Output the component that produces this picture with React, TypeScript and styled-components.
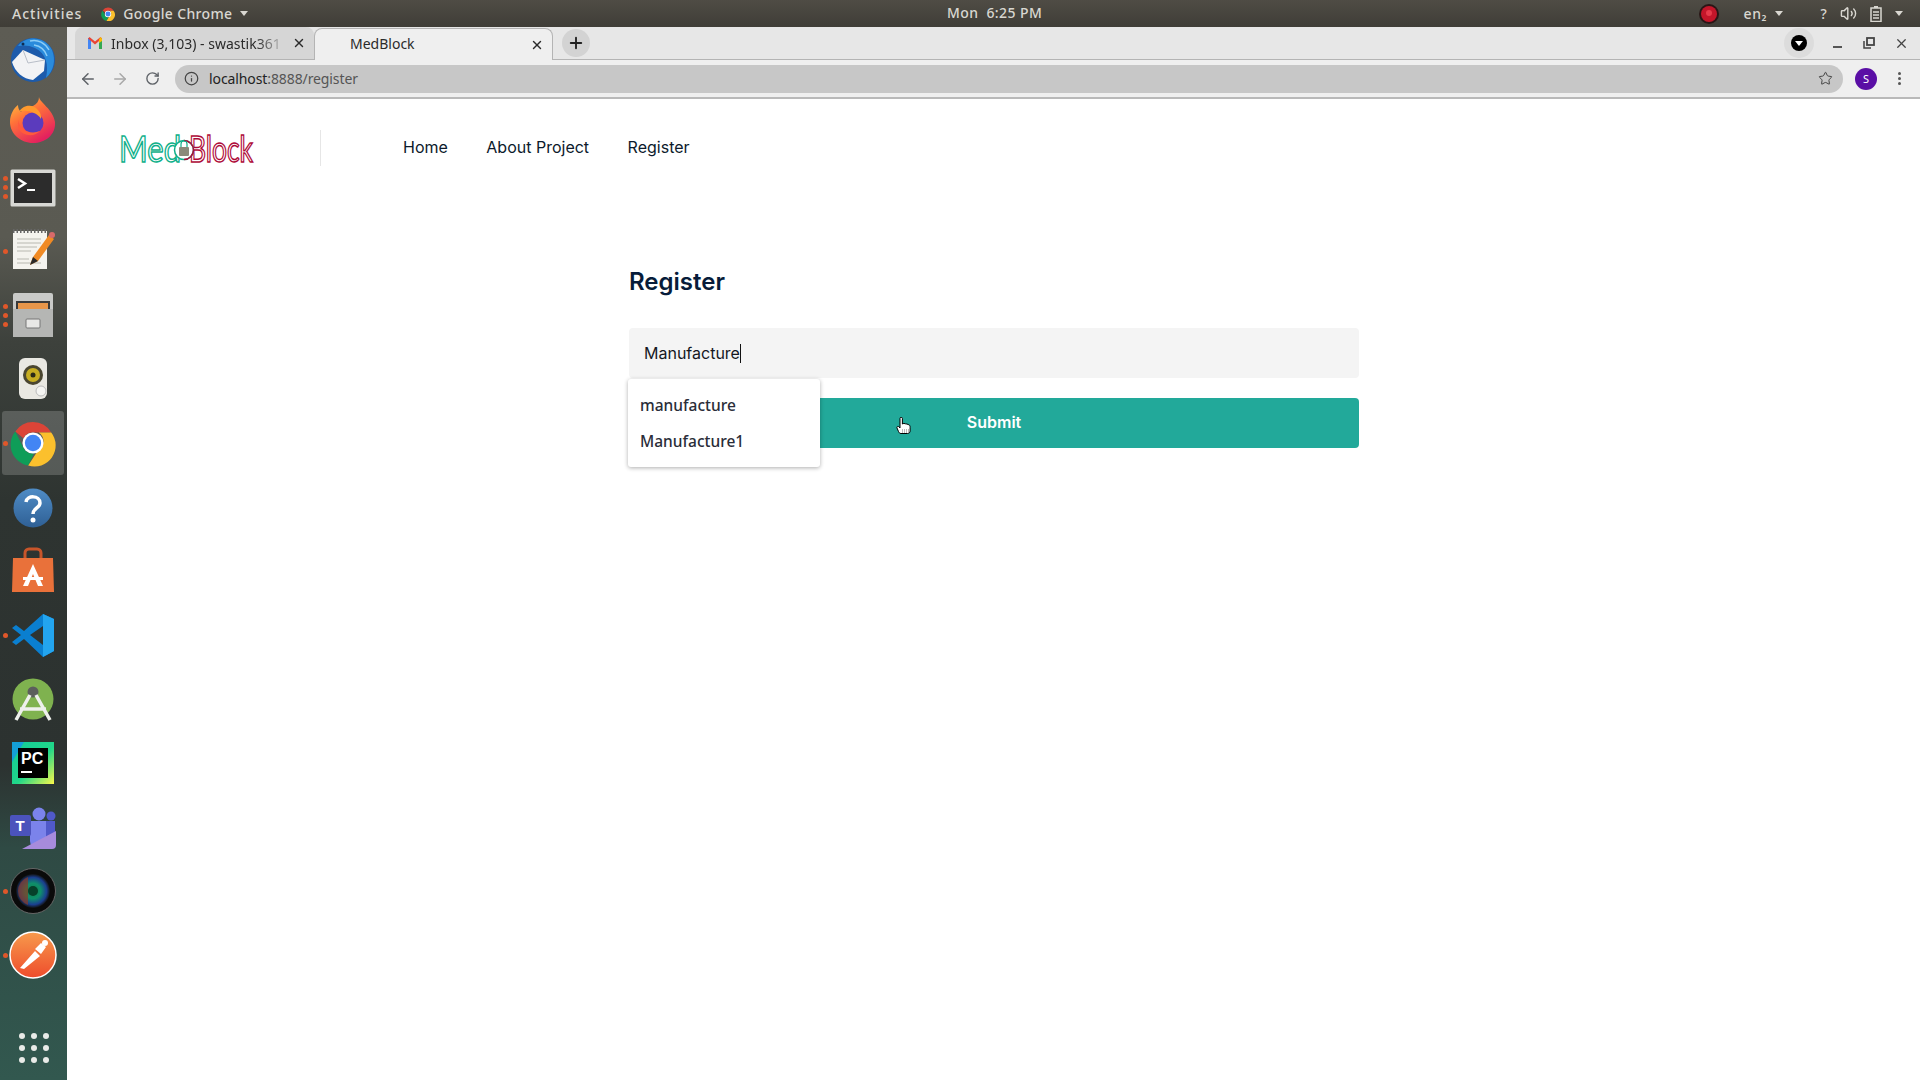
import React from "react";
import styled, { createGlobalStyle } from "styled-components";
import { ArrowLeft, ArrowRight, RotateCw, Info, Star, X, Plus, Volume2 } from "lucide-react";

const Global = createGlobalStyle`
  html, body { margin: 0; padding: 0; width: 1920px; height: 1080px; overflow: hidden; background: #fff; }
  * { box-sizing: border-box; }
`;

const Desktop = styled.div`
  width: 1920px; height: 1080px; display: flex; flex-direction: column;
  font-family: "Inter", "Liberation Sans", sans-serif;
`;
const TopBar = styled.div`
  height: 27px; flex: none; display: flex; align-items: center; padding: 0 0 0 12px;
  position: relative; color: #d9d7d1; font-family: "Noto Sans", sans-serif; font-size: 14px; font-weight: 500;
  background: linear-gradient(#4f4c45, #3f3d37);
`;
const TopLabel = styled.span<{ $gap?: number; $spacing?: number }>`
  margin-left: ${(p) => p.$gap ?? 0}px; white-space: nowrap; line-height: 27px; letter-spacing: ${(p) => p.$spacing ?? 0.2}px;
  display: inline-flex; align-items: center;
`;
const Clock = styled.span`
  position: absolute; left: 947px; top: 0; line-height: 26px; letter-spacing: 0.4px; white-space: nowrap;
`;
const Caret = styled.span<{ $gap?: number }>`
  width: 0; height: 0; margin-left: ${(p) => p.$gap ?? 6}px;
  border-left: 4.5px solid transparent; border-right: 4.5px solid transparent; border-top: 5px solid #d9d7d1;
`;
const TopRight = styled.div`
  margin-left: auto; display: flex; align-items: center; height: 27px;
`;
const Lang = styled.span`
  margin-left: 25px; font-size: 14px; letter-spacing: 0.6px; width: 28px;
`;
const Body = styled.div`
  flex: 1; display: flex; min-height: 0;
`;
const Dock = styled.nav`
  width: 67px; flex: none; display: flex; flex-direction: column; padding-top: 0;
  background: linear-gradient(#5d5c54 0%, #5a5a52 20%, #3d413c 30%, #2e3431 45%, #2c3230 70%, #2f4a44 78%, #32584f 100%);
`;
const DockItem = styled.div<{ $active?: boolean }>`
  position: relative; height: 64px; display: flex; align-items: center; justify-content: center;
  margin: 0 3px 0 2px;
  border-radius: 3px;
  background: ${(p) => (p.$active ? "rgba(255,255,255,0.18)" : "transparent")};
  svg { overflow: visible; }
`;
const Dots = styled.div`
  position: absolute; left: 1px; top: 0; bottom: 0; display: flex; flex-direction: column; justify-content: center; gap: 4px;
`;
const Dot = styled.i`
  display: block; width: 5px; height: 5px; border-radius: 50%; background: #e0572a;
`;
const DockGrid = styled.div`
  margin-top: auto; margin-bottom: 17px; align-self: center; display: grid; grid-template-columns: repeat(3, 6px); gap: 6px;
`;
const GridDot = styled.i`
  display: block; width: 6px; height: 6px; border-radius: 50%; background: #e9ebe8;
`;
const Browser = styled.div`
  flex: 1; display: flex; flex-direction: column; min-width: 0;
`;
const TabStrip = styled.div`
  height: 33px; flex: none; display: flex; align-items: flex-end; padding-left: 8px;
  background: #e7e7e7; border-bottom: 1px solid #b4b4b4; position: relative;
`;
const Tab = styled.div<{ $active?: boolean }>`
  width: 239px; height: 32px; display: flex; align-items: center; padding: 0 8px 0 ${(p) => (p.$active ? 11 : 12)}px;
  font-family: "Noto Sans", sans-serif; font-size: 14px; color: #2b2b2b;
  border-radius: 8px 8px 0 0;
  background: ${(p) => (p.$active ? "#efefef" : "#d6d6d6")};
  border: ${(p) => (p.$active ? "1px solid #b4b4b4" : "none")};
  border-bottom: none; position: relative; z-index: 1; margin-bottom: ${(p) => (p.$active ? -1 : 0)}px;
`;
const TabTitle = styled.span<{ $fade?: boolean; $raise?: boolean }>`
  flex: 1; margin-left: 8px; white-space: nowrap;
  ${(p) => p.$raise && `margin-bottom: 2px;`}
  ${(p) => p.$fade && `-webkit-mask-image: linear-gradient(90deg, #000 80%, transparent 97%);`}
`;
const Favicon = styled.span`
  width: 16px; height: 16px; flex: none; display: flex; align-items: center; justify-content: center;
`;
const NewTab = styled.div`
  width: 28px; height: 28px; border-radius: 50%; background: #d3d3d3; display: flex; align-items: center; justify-content: center;
  margin: 0 0 2px 9px; color: #222;
`;
const WindowButtons = styled.div`
  margin-left: auto; height: 32px; display: flex; align-items: center; color: #444; padding-right: 3px;
`;
const Profile = styled.div`
  width: 30px; height: 30px; border-radius: 50%; background: #dcdcdc; display: flex; align-items: center; justify-content: center; margin-right: 7px;
`;
const ProfileInner = styled.div`
  width: 16px; height: 16px; border-radius: 50%; background: #000; display: flex; align-items: center; justify-content: center;
`;
const ProfileTri = styled.span`
  width: 0; height: 0; border-left: 4px solid transparent; border-right: 4px solid transparent; border-top: 5px solid #fff;
`;
const MinBar = styled.span`
  width: 9px; height: 2px; background: #555; margin-top: 7px;
`;
const WinSlot = styled.span`
  width: 32px; display: flex; justify-content: center; align-items: center;
`;
const Toolbar = styled.div`
  height: 39px; flex: none; display: flex; align-items: center; padding: 0 0 0 5px;
  background: #efefef; border-bottom: 2px solid #b9b9b9; color: #5f6368;
`;
const ToolBtn = styled.span<{ $w?: number }>`
  width: ${(p) => p.$w ?? 32}px; display: flex; justify-content: center; align-items: center; flex: none;
`;
const AddressBar = styled.div`
  flex: 1; height: 28px; margin-left: 7px; border-radius: 14px; background: #c7c7c7; display: flex; align-items: center; padding: 0 10px 0 9px;
  font-family: "Noto Sans", sans-serif; font-size: 14px; color: #222;
`;
const Url = styled.span`
  margin-left: 10px; letter-spacing: -0.1px;
`;
const UrlRest = styled.span`
  color: #555;
`;
const Avatar = styled.div`
  width: 22px; height: 22px; border-radius: 50%; background: #5a0ea5; color: #fff; font-size: 11px; display: flex; align-items: center; justify-content: center;
  font-family: "Noto Sans", sans-serif; margin: 0 1px 0 12px;
`;
const Kebab = styled.div`
  width: 42px; display: flex; flex-direction: column; align-items: center; gap: 2px;
`;
const KebabDot = styled.i`
  display: block; width: 3px; height: 3px; border-radius: 50%; background: #555;
`;
const Spacer = styled.span`
  margin-left: auto;
`;
const Page = styled.main`
  flex: 1; background: #fff; color: #0b1b33; display: flex; flex-direction: column;
`;
const Header = styled.header`
  display: flex; align-items: center; padding: 32px 0 0 52px; height: 66px; flex: none;
`;
const LogoBox = styled.div`
  width: 202px; height: 36px; border-right: 1px solid #e6e6e6; display: flex; align-items: center;
`;
const LogoSvg = styled.svg`
  overflow: visible; flex: none;
`;
const Nav = styled.div`
  display: flex; margin-left: 82px; gap: 38.5px; margin-top: -2px;
`;
const NavLink = styled.a`
  font-size: 16px; color: #0c1a2c; white-space: nowrap;
`;
const Form = styled.section`
  width: 730px; margin: 99px 0 0 562px;
`;
const Title = styled.h1`
  margin: 0 0 28px; font-size: 24px; line-height: 36px; font-weight: 600; color: #071c3a;
`;
const Field = styled.div`
  position: relative; height: 50px; background: #f4f4f4; border-radius: 4px; display: flex; align-items: center; padding-left: 15px;
  font-size: 16px; color: #14181f; margin-bottom: 20px;
`;
const TextCaret = styled.span`
  display: inline-block; width: 1px; height: 19px; background: #111; margin-left: 0px;
`;
const Menu = styled.div`
  position: absolute; left: -1px; top: 51px; width: 192px; height: 88px; padding: 8px 0; background: #fff; border-radius: 3px;
  box-shadow: 0 1px 4px rgba(0,0,0,0.32); z-index: 2;
`;
const MenuItem = styled.div`
  height: 36px; line-height: 36px; padding-left: 12px; font-family: "Noto Sans", sans-serif; font-size: 15.5px; font-weight: 500; color: #2a2d38;
`;
const Submit = styled.button`
  position: relative; width: 100%; height: 50px; border: 0; border-radius: 4px; background: #22a99a; color: #fff; font-family: inherit; font-size: 16px; font-weight: 600;
  padding: 0 0 2px;
`;
const Pointer = styled.svg`
  position: absolute; left: 267px; top: 19px;
`;

const Thunderbird = () => (
  <svg width="48" height="48" viewBox="0 0 48 48">
    <circle cx="24" cy="25" r="22" fill="#1d5bab" />
    <path d="M9 11C17 0 36 1 43 15 47 25 45 35 37 43 40 30 37 18 26 13 20 10 14 10 9 11Z" fill="#2a8bdc" />
    <path d="M21 6c8-2 15 2 19 9M25 10c6 1 11 5 13 11" stroke="#8ccdf6" strokeWidth="1.500" fill="none" />
    <path d="M3 27 14 15 36 25 35 36 24 45C14 44 6 37 3 27Z" fill="#f2f3f5" />
    <path d="M14 15 19 28 36 25" stroke="#b8bec8" strokeWidth="1" fill="none" />
    <circle cx="14" cy="9" r="1.500" fill="#0e2a52" />
  </svg>
);
const Firefox = () => (
  <svg width="48" height="48" viewBox="0 3 48 48">
    <defs>
      <linearGradient id="ff" x1="0" y1="0" x2="0.6" y2="1">
        <stop offset="0" stopColor="#ffd23f" />
        <stop offset="0.45" stopColor="#ff7139" />
        <stop offset="1" stopColor="#e3205f" />
      </linearGradient>
    </defs>
    <path d="M30 1c1 6 14 12 16 25 1 13-10 21-22 21S1 38 1 26C1 18 5 12 9 9c0 3 1 5 3 7 2-6 9-6 12-6 4-2 6-5 6-9Z" fill="url(#ff)" />
    <circle cx="24" cy="27" r="10.500" fill="#5b3bbd" />
    <path d="M10 16c6-3 18 0 22 7 1-6-4-12-10-13-5-1-10 2-12 6Z" fill="#ff9a2e" />
    <path d="M9 24c2 10 12 15 22 11-5 6-17 6-22-3Z" fill="#ff5a3c" />
  </svg>
);
const Terminal = () => (
  <svg width="46" height="38" viewBox="0 -1 46 38">
    <rect x="0.500" y="0.500" width="45" height="37" rx="1.500" fill="#d8d8d4" />
    <rect x="4" y="4" width="38" height="30" fill="#2c2c2c" />
    <path d="M8 10l7 4.500-7 4.500" stroke="#fff" strokeWidth="2.500" fill="none" />
    <rect x="17" y="20" width="8" height="2" fill="#fff" />
  </svg>
);
const Notepad = () => (
  <svg width="46" height="42" viewBox="0 2 46 42">
    <rect x="3" y="3" width="34" height="38" fill="#f4f3ee" />
    <path d="M3 3h34" stroke="#666" strokeWidth="4" strokeDasharray="1.500 2" />
    <path d="M7 11h24M7 15h24M7 19h20M7 23h14M7 31h12M7 35h24" stroke="#b8b8b0" strokeWidth="1" />
    <path d="M20 37 23 29 39 7 44 11 28 33Z" fill="#f08a24" />
    <path d="M20 37 23 29 28 33Z" fill="#2a2a2a" />
    <circle cx="42" cy="7" r="3" fill="#d96a6a" />
  </svg>
);
const Files = () => (
  <svg width="42" height="44" viewBox="0 0 42 44">
    <rect x="1" y="0" width="40" height="44" rx="2" fill="#c9cac8" />
    <rect x="4" y="8" width="34" height="8" fill="#3a3a3a" />
    <rect x="6" y="10" width="30" height="6" fill="#e8964a" />
    <rect x="1" y="16" width="40" height="28" fill="#b5b6b4" />
    <rect x="14" y="26" width="14" height="9" rx="1" fill="#e8e8e6" stroke="#777" />
  </svg>
);
const Speaker = () => (
  <svg width="40" height="44" viewBox="2 0 40 44">
    <rect x="8" y="1" width="28" height="41" rx="6" fill="#e9e8e2" />
    <circle cx="22" cy="18" r="10" fill="#4a4630" />
    <circle cx="22" cy="18" r="7" fill="#c6ad22" />
    <circle cx="22" cy="18" r="2.500" fill="#2a2a18" />
    <circle cx="30" cy="34" r="5" fill="#f5f5f2" stroke="#bbb" />
  </svg>
);
const ChromeLogo = ({ size = 46 }: { size?: number }) => (
  <svg width={size} height={size} viewBox="0 0 48 48">
    <path d="M24 2a22 22 0 0 1 19 11H24a11 11 0 0 0-10 6L5.500 12A22 22 0 0 1 24 2Z" fill="#db4437" />
    <path d="M5.500 12 14 29a11 11 0 0 0 11 6l-6 12.500A22 22 0 0 1 5.500 12Z" fill="#0f9d58" />
    <path d="M43 13a22 22 0 0 1-24 34.500L29 32a11 11 0 0 0 1-19Z" fill="#fbc02d" />
    <circle cx="24" cy="24" r="11" fill="#fff" />
    <circle cx="24" cy="24" r="8.500" fill="#4285f4" />
  </svg>
);
const Help = () => (
  <svg width="40" height="40" viewBox="0 -1 40 40">
    <defs>
      <linearGradient id="hp" x1="0" y1="0" x2="0" y2="1">
        <stop offset="0" stopColor="#4f8cc6" />
        <stop offset="1" stopColor="#2f6095" />
      </linearGradient>
    </defs>
    <circle cx="20" cy="20" r="19.500" fill="url(#hp)" />
    <path d="M13 14c1-7 14-7 14 1 0 5-7 5-7 11" stroke="#fff" strokeWidth="3.500" fill="none" />
    <circle cx="20" cy="32" r="2.500" fill="#fff" />
  </svg>
);
const Software = () => (
  <svg width="42" height="44" viewBox="0 1 42 44">
    <path d="M13 11V5a4 4 0 0 1 4-4h8a4 4 0 0 1 4 4v6" stroke="#c8552a" strokeWidth="3" fill="none" />
    <path d="M1 10h40l1 34H0Z" fill="#e9713a" />
    <path d="M21 16 31 38H26L21 26 16 38H11Z" fill="#fff" />
    <rect x="11" y="29" width="20" height="3" fill="#fff" />
  </svg>
);
const VSCode = () => (
  <svg width="42" height="44" viewBox="0 0 42 44">
    <path d="M31 1 42 6v32l-11 6-19-18-8 6-4-3 9-7-9-7 4-3 8 6Z" fill="#0a7fd0" />
    <path d="M31 1 42 6v32l-11 6Z" fill="#23a5ef" />
    <path d="M31 13 18 22l13 10Z" fill="#2e3431" />
  </svg>
);
const AndroidStudio = () => (
  <svg width="42" height="42" viewBox="0 0 42 42">
    <circle cx="21" cy="21" r="20.500" fill="#7fb24f" />
    <circle cx="21" cy="14" r="5.500" fill="#5c5f5c" />
    <path d="M18 17 4 42M24 17 38 42M8 31h26" stroke="#eef0ec" strokeWidth="3.500" fill="none" />
  </svg>
);
const PyCharm = () => (
  <svg width="42" height="42" viewBox="0 0 42 42">
    <defs>
      <linearGradient id="pc" x1="0" y1="0" x2="1" y2="1">
        <stop offset="0" stopColor="#12c99b" />
        <stop offset="0.55" stopColor="#21d789" />
        <stop offset="1" stopColor="#fcf84a" />
      </linearGradient>
    </defs>
    <rect width="42" height="42" fill="url(#pc)" />
    <path d="M0 0h12L0 20Z" fill="#149fd8" />
    <rect x="6" y="6" width="30" height="30" fill="#000" />
    <text x="9" y="22" fill="#fff" fontFamily="Liberation Sans, sans-serif" fontWeight="700" fontSize="16">PC</text>
    <rect x="9" y="29" width="11" height="2" fill="#fff" />
  </svg>
);
const Teams = () => (
  <svg width="46" height="44" viewBox="0 -2 46 44">
    <circle cx="29" cy="7" r="6.500" fill="#7b83eb" />
    <circle cx="41" cy="9" r="4.500" fill="#5059c9" />
    <path d="M20 14h16v20a8 8 0 0 1-16 0Z" fill="#7b83eb" />
    <path d="M36 14h9v14a5 5 0 0 1-9 3Z" fill="#5059c9" />
    <rect x="0" y="8" width="21" height="21" rx="2" fill="#4b53bc" />
    <text x="5.500" y="24" fill="#fff" fontFamily="Liberation Sans, sans-serif" fontWeight="700" fontSize="15">T</text>
    <path d="M12 42 46 24v14a4 4 0 0 1-4 4Z" fill="#a78bdc" />
  </svg>
);
const Camera = () => (
  <svg width="46" height="46" viewBox="0 0 46 46">
    <defs>
      <radialGradient id="cm" cx="0.5" cy="0.5" r="0.5">
        <stop offset="0" stopColor="#0d7a4a" />
        <stop offset="0.45" stopColor="#0f8f6a" />
        <stop offset="0.8" stopColor="#1a3f8f" />
        <stop offset="1" stopColor="#111" />
      </radialGradient>
    </defs>
    <circle cx="23" cy="23" r="22.500" fill="#0a0a0a" stroke="#666" strokeWidth="1" />
    <circle cx="23" cy="23" r="17" fill="url(#cm)" />
    <path d="M8 23a15 15 0 0 1 10-14v28A15 15 0 0 1 8 23Z" fill="#8a3a22" opacity="0.7" />
    <circle cx="23" cy="23" r="5" fill="#06402a" />
  </svg>
);
const Postman = () => (
  <svg width="48" height="48" viewBox="0 0 48 48">
    <defs>
      <linearGradient id="pm" x1="0" y1="0" x2="0" y2="1">
        <stop offset="0" stopColor="#f79a4c" />
        <stop offset="1" stopColor="#ee4c2c" />
      </linearGradient>
    </defs>
    <circle cx="24" cy="24" r="23" fill="url(#pm)" stroke="#fff" strokeWidth="1.500" />
    <path d="M11 37 26 20l5 5L15 38ZM26 18l6-6 5 4-5 7Z" fill="#fff" />
    <circle cx="36" cy="12" r="3" fill="#fff" />
  </svg>
);
const Gmail = () => (
  <svg width="14" height="12" viewBox="0 0 14 12">
    <rect x="0" y="1" width="3" height="11" fill="#4285f4" />
    <rect x="11" y="1" width="3" height="11" fill="#34a853" />
    <path d="M0 1.500 1.500 0 7 4.500 12.500 0 14 1.500 7 7.500Z" fill="#ea4335" />
    <path d="M11 2.500 12.500 0 14 1.500V4L11 6Z" fill="#fbbc04" />
  </svg>
);
const Record = () => (
  <svg width="20" height="20" viewBox="0 0 20 20">
    <circle cx="10" cy="10" r="10" fill="#2a1616" />
    <circle cx="10" cy="10" r="8" fill="#c4162a" />
    <circle cx="10" cy="9" r="3" fill="#e63a4a" />
  </svg>
);
const Battery = () => (
  <svg width="12" height="16" viewBox="0 0 12 16">
    <rect x="4" y="0" width="4" height="2" fill="#d9d7d1" />
    <rect x="1" y="2" width="10" height="13.500" fill="none" stroke="#d9d7d1" strokeWidth="1.500" />
    <path d="M3 6h6M3 9h6M3 12h6" stroke="#d9d7d1" strokeWidth="1.500" />
  </svg>
);
const Restore = () => (
  <svg width="12" height="12" viewBox="0 0 12 12">
    <rect x="4" y="1" width="7" height="7" fill="none" stroke="#444" strokeWidth="1.800" />
    <path d="M1 4v7h7" fill="none" stroke="#444" strokeWidth="1.500" />
  </svg>
);
const Logo = () => (
  <LogoSvg width="136" height="46" viewBox="0 -5 136 46" role="img" aria-label="MedBlock">
    <text x="0" y="32" fontFamily="Lato, sans-serif" fontSize="36" fill="none" stroke="#0fb08a" strokeWidth="1.500" textLength="62" lengthAdjust="spacingAndGlyphs">Med</text>
    <text x="70" y="32" fontFamily="Lato, sans-serif" fontSize="36" fill="none" stroke="#ae0a38" strokeWidth="1.500" textLength="64" lengthAdjust="spacingAndGlyphs">Block</text>
    <circle cx="65" cy="20" r="9.500" fill="#fff" stroke="#0fb08a" strokeWidth="1.500" />
    <path d="M65 10.500a9.500 9.500 0 0 1 0 19" fill="none" stroke="#ae0a38" strokeWidth="1.500" />
    <rect x="60" y="17" width="10" height="9" rx="1" fill="#8a8a7a" />
    <path d="M62 17v-3a3 3 0 0 1 6 0v3" fill="none" stroke="#0fb08a" strokeWidth="1.200" />
  </LogoSvg>
);
const Hand = () => (
  <Pointer width="16" height="18" viewBox="0 0 16 18">
    <path d="M4 1.500a1.200 1.200 0 0 1 2.400 0V7l1.500-.6 1.500.4 1.500.2 2 .8c1 .5 1.200 1.200 1.200 2.500V14c0 1.500-1 2.500-2.500 2.500H5c-1.500 0-2-1-2.500-2L1 11c-.5-1 .5-2 1.500-1.500L4 11Z" fill="#fff" stroke="#000" strokeWidth="1" />
    <path d="M6 13h7M6 15h7" stroke="#777" strokeWidth="1" strokeDasharray="1 1" />
  </Pointer>
);

const dock: { icon: React.ReactNode; dots?: number; active?: boolean }[] = [
  { icon: <Thunderbird /> },
  { icon: <Firefox /> },
  { icon: <Terminal />, dots: 3 },
  { icon: <Notepad />, dots: 1 },
  { icon: <Files />, dots: 3 },
  { icon: <Speaker /> },
  { icon: <ChromeLogo />, dots: 1, active: true },
  { icon: <Help /> },
  { icon: <Software /> },
  { icon: <VSCode />, dots: 1 },
  { icon: <AndroidStudio /> },
  { icon: <PyCharm /> },
  { icon: <Teams /> },
  { icon: <Camera />, dots: 1 },
  { icon: <Postman />, dots: 1 },
];

export default function App() {
  return (
    <Desktop>
      <Global />
      <TopBar>
        <TopLabel $spacing={1}>Activities</TopLabel>
        <TopLabel $gap={19}><ChromeLogo size={14} /></TopLabel>
        <TopLabel $gap={8} $spacing={0.35}>Google Chrome</TopLabel>
        <Caret $gap={8} />
        <Clock>Mon&nbsp; 6:25 PM</Clock>
        <TopRight>
          <Record />
          <Lang>en₂</Lang>
          <Caret $gap={3} />
          <TopLabel $gap={38}>?</TopLabel>
          <TopLabel $gap={13}><Volume2 size={17} strokeWidth={2} /></TopLabel>
          <TopLabel $gap={13}><Battery /></TopLabel>
          <Caret $gap={13} />
          <TopLabel $gap={17} />
        </TopRight>
      </TopBar>
      <Body>
        <Dock>
          {dock.map((d, i) => (
            <DockItem key={i} $active={d.active}>
              {d.dots ? (
                <Dots>
                  {Array.from({ length: d.dots }).map((_, k) => (
                    <Dot key={k} />
                  ))}
                </Dots>
              ) : null}
              {d.icon}
            </DockItem>
          ))}
          <DockGrid>
            {Array.from({ length: 9 }).map((_, i) => (
              <GridDot key={i} />
            ))}
          </DockGrid>
        </Dock>
        <Browser>
          <TabStrip>
            <Tab>
              <Favicon><Gmail /></Favicon>
              <TabTitle $fade>Inbox (3,103) - swastik361</TabTitle>
              <X size={14} strokeWidth={2.5} />
            </Tab>
            <Tab $active>
              <Favicon />
              <TabTitle $raise>MedBlock</TabTitle>
              <X size={14} strokeWidth={2.5} />
            </Tab>
            <NewTab><Plus size={18} strokeWidth={2.5} /></NewTab>
            <WindowButtons>
              <Profile>
                <ProfileInner><ProfileTri /></ProfileInner>
              </Profile>
              <WinSlot><MinBar /></WinSlot>
              <WinSlot><Restore /></WinSlot>
              <WinSlot><X size={15} strokeWidth={2} /></WinSlot>
            </WindowButtons>
          </TabStrip>
          <Toolbar>
            <ToolBtn><ArrowLeft size={18} strokeWidth={2} /></ToolBtn>
            <ToolBtn><ArrowRight size={18} strokeWidth={2} color="#a8a8a8" /></ToolBtn>
            <ToolBtn><RotateCw size={15} strokeWidth={2.2} /></ToolBtn>
            <AddressBar>
              <Info size={15} strokeWidth={2} color="#444" />
              <Url>localhost<UrlRest>:8888/register</UrlRest></Url>
              <Spacer />
              <Star size={15} strokeWidth={1.6} color="#444" />
            </AddressBar>
            <Avatar>S</Avatar>
            <Kebab>
              <KebabDot />
              <KebabDot />
              <KebabDot />
            </Kebab>
          </Toolbar>
          <Page>
            <Header>
              <LogoBox><Logo /></LogoBox>
              <Nav>
                <NavLink>Home</NavLink>
                <NavLink>About Project</NavLink>
                <NavLink>Register</NavLink>
              </Nav>
            </Header>
            <Form>
              <Title>Register</Title>
              <Field>
                Manufacture<TextCaret />
                <Menu>
                  <MenuItem>manufacture</MenuItem>
                  <MenuItem>Manufacture1</MenuItem>
                </Menu>
              </Field>
              <Submit>
                Submit
                <Hand />
              </Submit>
            </Form>
          </Page>
        </Browser>
      </Body>
    </Desktop>
  );
}
